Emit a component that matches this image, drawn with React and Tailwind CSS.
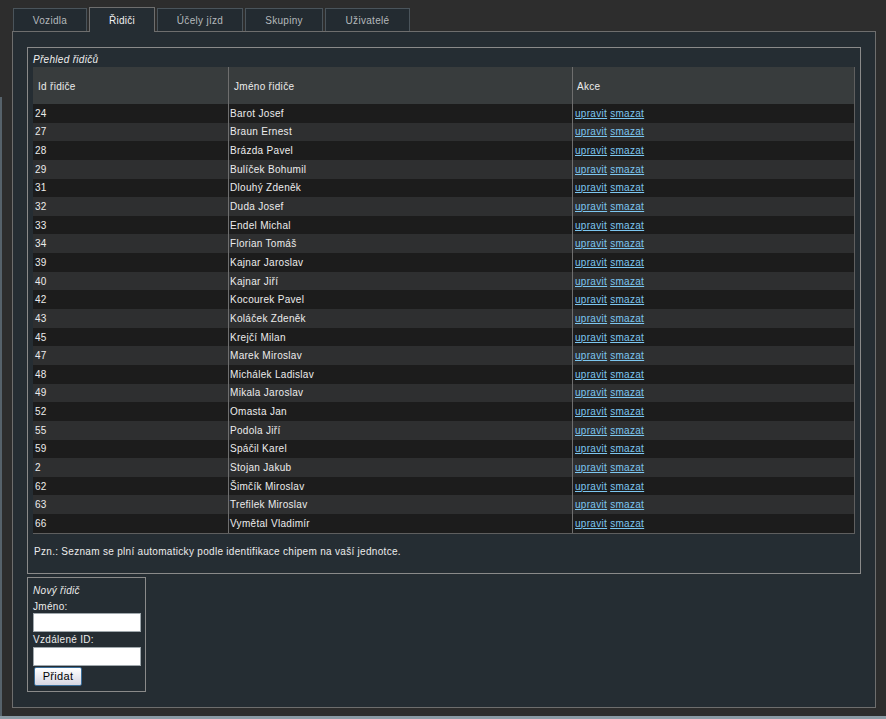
import React from 'react';

const drivers = [
  ['24', 'Barot Josef'],
  ['27', 'Braun Ernest'],
  ['28', 'Brázda Pavel'],
  ['29', 'Bulíček Bohumil'],
  ['31', 'Dlouhý Zdeněk'],
  ['32', 'Duda Josef'],
  ['33', 'Endel Michal'],
  ['34', 'Florian Tomáš'],
  ['39', 'Kajnar Jaroslav'],
  ['40', 'Kajnar Jiří'],
  ['42', 'Kocourek Pavel'],
  ['43', 'Koláček Zdeněk'],
  ['45', 'Krejčí Milan'],
  ['47', 'Marek Miroslav'],
  ['48', 'Michálek Ladislav'],
  ['49', 'Mikala Jaroslav'],
  ['52', 'Omasta Jan'],
  ['55', 'Podola Jiří'],
  ['59', 'Spáčil Karel'],
  ['2', 'Stojan Jakub'],
  ['62', 'Šimčík Miroslav'],
  ['63', 'Trefilek Miroslav'],
  ['66', 'Vymětal Vladimír'],
];

const tabs = [
  { label: 'Vozidla', w: 'w-[74px]' },
  { label: 'Řidiči', w: 'w-[66px]', active: true },
  { label: 'Účely jízd', w: 'w-[86px]' },
  { label: 'Skupiny', w: 'w-[78px]' },
  { label: 'Uživatelé', w: 'w-[85px]' },
];

const App = () => {
  return (
    <div className="w-[886px] h-[719px] bg-[#2d2d2d] overflow-hidden font-['Liberation_Sans',Arial,sans-serif] text-[10px] tracking-[0.3px] text-[#ececec]">
      <div className="flex h-[716px]">
        <div className="w-[2px] mt-[97px] bg-[#56626b]" />
        <div className="flex-1 pl-[10px] pt-[7px]">
          {/* tabs */}
          <div className="flex items-end h-[24px] pl-[1px] gap-[2px]">
            {tabs.map((t) =>
              t.active ? (
                <div
                  key={t.label}
                  className={`${t.w} h-[25px] -mb-px z-10 flex items-center justify-center pt-[1px] bg-[#252d33] border border-b-0 border-[#6e6e6e] text-[#f2f2f2]`}
                >
                  {t.label}
                </div>
              ) : (
                <div
                  key={t.label}
                  className={`${t.w} h-[23px] flex items-center justify-center bg-[#232b31] border border-b-0 border-[#4a545b] text-[#b4b9bc]`}
                >
                  {t.label}
                </div>
              )
            )}
          </div>

          {/* main panel */}
          <div className="w-[864px] h-[677px] border border-[#6e6e6e] bg-[#252d33] pl-[14px] pt-[15px]">
            <div className="w-[834px] h-[527px] border border-[#8a8a8a] pl-[5px] pt-[4px]">
              <div className="italic h-[15px] leading-[15px] text-[#f0f0f0]">Přehled řidičů</div>
              <div className="w-[822px] border-r border-b border-[#5f5f5f]">
                <div className="flex h-[37px] bg-[#383c3d] items-center">
                  <div className="w-[195px] pl-[5px] pt-[2px] h-full flex items-center">Id řidiče</div>
                  <div className="w-[344px] pl-[5px] pt-[2px] h-full flex items-center border-l border-[#6e6e6e]">Jméno řidiče</div>
                  <div className="flex-1 pl-[4px] pt-[2px] h-full flex items-center border-l border-[#6e6e6e]">Akce</div>
                </div>
                {drivers.map(([id, name], i) => (
                  <div
                    key={id + name}
                    className={`flex h-[18.65px] items-center ${i % 2 === 0 ? 'bg-[#1c1c1c]' : 'bg-[#2e2f30]'}`}
                  >
                    <div className="w-[195px] pl-[2px] h-full flex items-center">{id}</div>
                    <div className="w-[344px] pl-[1px] h-full flex items-center border-l border-[#6e6e6e]">{name}</div>
                    <div className="flex-1 pl-[2px] h-full flex items-center gap-[3px] border-l border-[#6e6e6e] text-[#7cc6f0]">
                      <a href="#" className="underline">upravit</a>
                      <a href="#" className="underline">smazat</a>
                    </div>
                  </div>
                ))}
              </div>
              <div className="mt-[10px] pl-[1px]">Pzn.: Seznam se plní automaticky podle identifikace chipem na vaší jednotce.</div>
            </div>

            <div className="mt-[3px] w-[119px] h-[115px] border border-[#8a8a8a] pl-[5px] pt-[6px]">
              <div className="italic leading-[14px]">Nový řidič</div>
              <div className="leading-[13px] mt-[2px]">Jméno:</div>
              <input className="block w-[108px] h-[19px] bg-white border border-[#a0a8ad] outline-none" />
              <div className="leading-[15px]">Vzdálené ID:</div>
              <input className="block w-[108px] h-[19px] bg-white border border-[#a0a8ad] outline-none" />
              <button className="block mt-[1px] ml-[1px] w-[48px] h-[19px] rounded-[2px] border border-[#3a6d98] bg-gradient-to-b from-[#ffffff] to-[#d6d6e2] text-black text-[11px] leading-none">
                Přidat
              </button>
            </div>
          </div>
        </div>
      </div>
      <div className="h-[3px] bg-[#8b9ba5]" />
    </div>
  );
};

export default App;
